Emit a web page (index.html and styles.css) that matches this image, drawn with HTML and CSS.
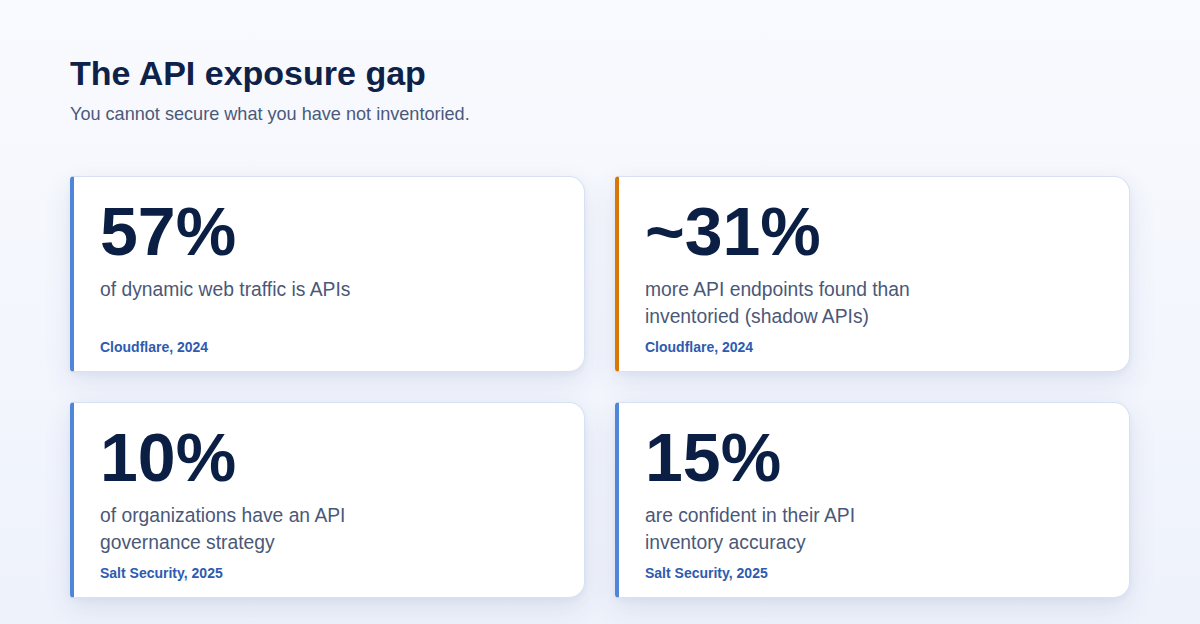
FILE: index.html
```html
<!DOCTYPE html>
<html lang="en">
<head>
<meta charset="utf-8">
<title>The API exposure gap</title>
<link rel="stylesheet" href="styles.css">
</head>
<body>
<main class="slide">
  <header class="head">
    <h1 class="title">The API exposure gap</h1>
    <p class="subtitle">You cannot secure what you have not inventoried.</p>
  </header>
  <section class="grid">
    <article class="card">
      <div class="num">57%</div>
      <p class="desc">of dynamic web traffic is APIs</p>
      <p class="src">Cloudflare, 2024</p>
    </article>
    <article class="card card-warn">
      <div class="num">~31%</div>
      <p class="desc">more API endpoints found than inventoried (shadow APIs)</p>
      <p class="src">Cloudflare, 2024</p>
    </article>
    <article class="card">
      <div class="num">10%</div>
      <p class="desc">of organizations have an API governance strategy</p>
      <p class="src">Salt Security, 2025</p>
    </article>
    <article class="card">
      <div class="num">15%</div>
      <p class="desc">are confident in their API inventory accuracy</p>
      <p class="src">Salt Security, 2025</p>
    </article>
  </section>
</main>
</body>
</html>
```

FILE: styles.css
```css
html, body {
  margin: 0;
  padding: 0;
}
body {
  width: 1200px;
  height: 624px;
  overflow: hidden;
  font-family: "Liberation Sans", Arial, Helvetica, sans-serif;
  background: linear-gradient(180deg, #f9fafe 0%, #f3f6fd 55%, #eef2fb 100%);
}
.slide {
  box-sizing: border-box;
  padding: 53px 70px 0;
}
.head {
  margin-bottom: 49px;
}
.title {
  margin: 0;
  font-size: 34px;
  line-height: 1.2;
  font-weight: 700;
  color: #0e2148;
}
.subtitle {
  margin: 8px 0 0;
  font-size: 18.1px;
  line-height: 1.4;
  color: #4a5a7a;
}
.grid {
  display: grid;
  grid-template-columns: 1fr 1fr;
  grid-template-rows: 196px 196px;
  gap: 30px;
}
.card {
  box-sizing: border-box;
  display: flex;
  flex-direction: column;
  background: #ffffff;
  border: 1px solid #d8e1f3;
  border-left: 4px solid #4f86d8;
  border-radius: 4px 16px 16px 4px;
  padding: 20px 26px 14px 26px;
  box-shadow: 0 10px 28px rgba(40, 62, 130, 0.10), 0 2px 6px rgba(40, 62, 130, 0.05);
}
.card-warn {
  border-left-color: #d97706;
}
.num {
  font-size: 68px;
  line-height: 1;
  font-weight: 700;
  color: #0b1f45;
}
.desc {
  margin: 11px 0 0;
  max-width: 284px;
  font-size: 19.3px;
  line-height: 27px;
  color: #4a5878;
}
.src {
  margin: auto 0 0;
  padding-top: 7px;
  font-size: 14px;
  line-height: 1.4;
  font-weight: 700;
  color: #2e5bb0;
}
```
